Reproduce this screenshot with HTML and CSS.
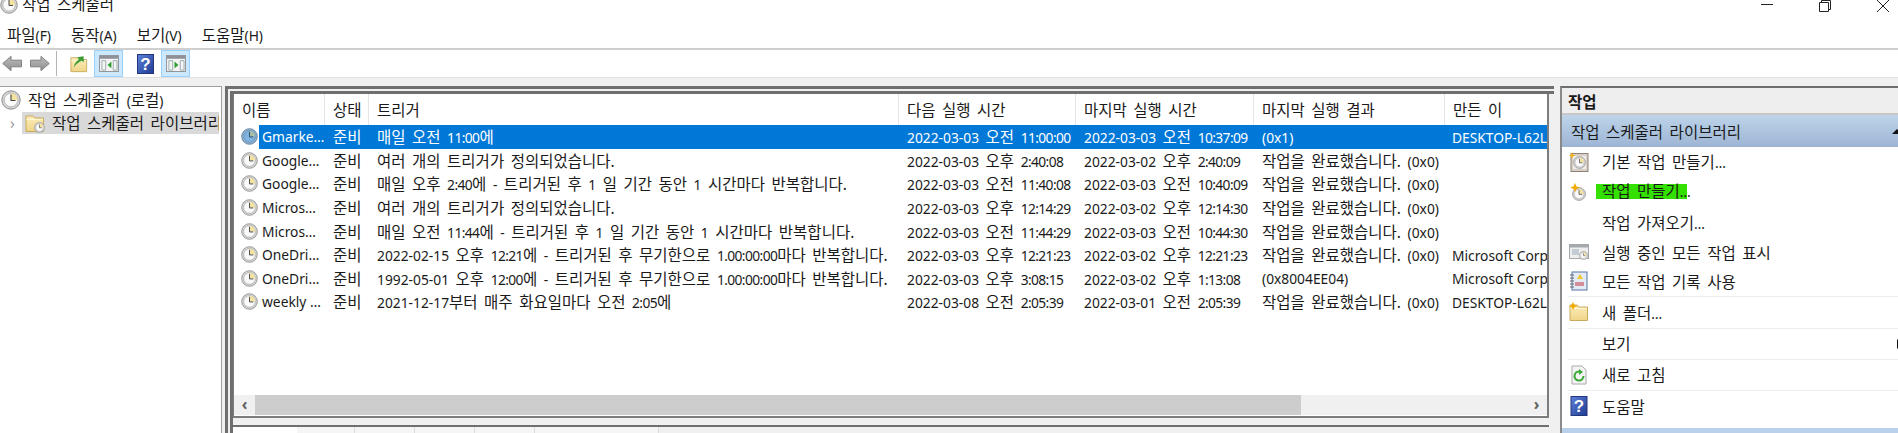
FILE: index.html
```html
<!DOCTYPE html>
<html lang="ko">
<head>
    <meta charset="UTF-8">
    <title>작업 스케줄러</title>
    <link rel="stylesheet" href="styles.css">
</head>
<body>
    <svg class="defs" width="0" height="0">
        <defs>
            <linearGradient id="help-fill" x1="0" y1="0" x2="1" y2="1">
                <stop offset="0" stop-color="#5f82d8"/>
                <stop offset="1" stop-color="#1f3a92"/>
            </linearGradient>
            <linearGradient id="folder-fill" x1="0" y1="0" x2="0" y2="1">
                <stop offset="0" stop-color="#fbeebb"/>
                <stop offset="1" stop-color="#f0d488"/>
            </linearGradient>
            <linearGradient id="arrow-fill" x1="0" y1="0" x2="0" y2="1">
                <stop offset="0" stop-color="#bdbdbd"/>
                <stop offset="1" stop-color="#8f8f8f"/>
            </linearGradient>
        </defs>
        <symbol id="clock" viewBox="0 0 20 20">
            <circle cx="10" cy="10" r="9.200" fill="#d4d4d4" stroke="#8f8f8f"/>
            <circle cx="10" cy="10" r="6.800" fill="#fafafa" stroke="#a5a5a5" stroke-width=".7"/>
            <path d="M10 10V3.200A6.800 6.800 0 0 1 16.800 10Z" fill="#f4e2a0"/>
            <path d="M10 4.500V10.500H14.500" fill="none" stroke="#444" stroke-width="1.100"/>
        </symbol>
        <symbol id="clock-sel" viewBox="0 0 20 20">
            <circle cx="10" cy="10" r="9.200" fill="#8fb0cc" stroke="#5f7f9f"/>
            <circle cx="10" cy="10" r="6.800" fill="#7fb4e0" stroke="#5f88ad" stroke-width=".7"/>
            <path d="M10 10V3.200A6.800 6.800 0 0 1 16.800 10Z" fill="#a8bfa8"/>
            <path d="M10 4.500V10.500H14.500" fill="none" stroke="#2c4a68" stroke-width="1.100"/>
        </symbol>
        <symbol id="panel" viewBox="0 0 21 18">
            <rect x=".5" y=".5" width="20" height="17" fill="#f5f5f5" stroke="#8d9097"/>
            <rect x="1" y="1" width="19" height="3" fill="#8d9097"/>
        </symbol>
        <symbol id="folder" viewBox="0 0 20 20">
            <path d="M1 3H8L10 5H18.500V18.500H1Z" fill="url(#folder-fill)" stroke="#c9aa5c"/>
            <path d="M1.500 6.500H18" stroke="#fff6d6"/>
        </symbol>
        <symbol id="help" viewBox="0 0 17 20">
            <rect x=".5" y=".5" width="16" height="19" fill="url(#help-fill)" stroke="#24377e"/>
            <text x="8.500" y="16" text-anchor="middle" class="help-mark">?</text>
        </symbol>
    </svg>

    <header class="titlebar">
        <div class="title">
            <svg class="ico-title"><use href="#clock"/></svg>
            <span>작업 스케줄러</span>
        </div>
        <div class="win-controls">
            <svg width="14" height="14" viewBox="0 0 14 14"><path d="M1 5.500H13" stroke="#222"/></svg>
            <svg width="14" height="14" viewBox="0 0 14 14"><path d="M1.500 3.500H10.500V12.500H1.500ZM3.500 3.500V1.500H12.500V10.500H10.500" fill="none" stroke="#222"/></svg>
            <svg width="14" height="14" viewBox="0 0 14 14"><path d="M1 1L13 13M13 1L1 13" stroke="#222"/></svg>
        </div>
    </header>

    <nav class="menubar">
        <span>파일<span class="n">(F)</span></span>
        <span>동작<span class="n">(A)</span></span>
        <span>보기<span class="n">(V)</span></span>
        <span>도움말<span class="n">(H)</span></span>
    </nav>

    <div class="toolbar">
        <svg class="tool-arrow" viewBox="0 0 21 17"><path d="M.8 8.500L9.500 1V5H20.500V12H9.500V16Z" fill="url(#arrow-fill)" stroke="#7c7c7c"/></svg>
        <svg class="tool-arrow" viewBox="0 0 21 17"><path d="M20.200 8.500L11.500 1V5H.5V12H11.500V16Z" fill="url(#arrow-fill)" stroke="#7c7c7c"/></svg>
        <span class="tool-sep"></span>
        <svg class="tool-folder" viewBox="0 0 20 20">
            <use href="#folder"/>
            <path d="M4 14C5 9 8 6 10 5L8 2.500L15 1.500L15.500 8L13 6.500C10 8 7 10 4 14Z" fill="#3e9c35"/>
        </svg>
        <button class="tool-btn">
            <svg viewBox="0 0 21 18" class="tool-panel"><use href="#panel"/><path d="M3 6H7V16H3ZM15 6H19V16H15Z" fill="none" stroke="#9aa"/><path d="M13 7V14L9 10.500Z" fill="#2a9c2a"/></svg>
        </button>
        <svg class="tool-help"><use href="#help"/></svg>
        <button class="tool-btn">
            <svg viewBox="0 0 21 18" class="tool-panel"><use href="#panel"/><path d="M3 6H7V16H3ZM15 6H19V16H15Z" fill="none" stroke="#9aa"/><path d="M9 7V14L13 10.500Z" fill="#2a9c2a"/></svg>
        </button>
    </div>

    <main class="workspace">
        <aside class="tree">
            <div class="tree-row">
                <svg class="ico-tree"><use href="#clock"/></svg>
                <span>작업 스케줄러 <span class="n">(</span>로컬<span class="n">)</span></span>
            </div>
            <div class="tree-row tree-child">
                <span class="chevron">›</span>
                <div class="tree-selected">
                    <svg class="ico-tree"><use href="#folder"/><use href="#clock" x="9" y="9" width="11" height="11"/></svg>
                    <span>작업 스케줄러 라이브러리</span>
                </div>
            </div>
        </aside>

        <section class="center">
            <div class="list">
                <div class="row list-head">
                    <div>이름</div><div>상태</div><div>트리거</div><div>다음 실행 시간</div><div>마지막 실행 시간</div><div>마지막 실행 결과</div><div>만든 이</div>
                </div>
                <div class="rows">
                    <div class="row selected">
                        <div class="name"><svg class="ico-row"><use href="#clock-sel"/></svg><span class="n">Gmarke…</span></div>
                        <div>준비</div>
                        <div>매일 오전 <span class="t">11:00</span>에</div>
                        <div><span class="n">2022-03-03</span> 오전 <span class="t">11:00:00</span></div>
                        <div><span class="n">2022-03-03</span> 오전 <span class="t">10:37:09</span></div>
                        <div><span class="n">(0x1)</span></div>
                        <div><span class="n">DESKTOP-L62L</span></div>
                    </div>
                    <div class="row">
                        <div class="name"><svg class="ico-row"><use href="#clock"/></svg><span class="n">Google…</span></div>
                        <div>준비</div>
                        <div>여러 개의 트리거가 정의되었습니다.</div>
                        <div><span class="n">2022-03-03</span> 오후 <span class="t">2:40:08</span></div>
                        <div><span class="n">2022-03-02</span> 오후 <span class="t">2:40:09</span></div>
                        <div>작업을 완료했습니다. <span class="n">(0x0)</span></div>
                        <div></div>
                    </div>
                    <div class="row">
                        <div class="name"><svg class="ico-row"><use href="#clock"/></svg><span class="n">Google…</span></div>
                        <div>준비</div>
                        <div>매일 오후 <span class="t">2:40</span>에 <span class="n">-</span> 트리거된 후 <span class="n">1</span> 일 기간 동안 <span class="n">1</span> 시간마다 반복합니다.</div>
                        <div><span class="n">2022-03-03</span> 오전 <span class="t">11:40:08</span></div>
                        <div><span class="n">2022-03-03</span> 오전 <span class="t">10:40:09</span></div>
                        <div>작업을 완료했습니다. <span class="n">(0x0)</span></div>
                        <div></div>
                    </div>
                    <div class="row">
                        <div class="name"><svg class="ico-row"><use href="#clock"/></svg><span class="n">Micros…</span></div>
                        <div>준비</div>
                        <div>여러 개의 트리거가 정의되었습니다.</div>
                        <div><span class="n">2022-03-03</span> 오후 <span class="t">12:14:29</span></div>
                        <div><span class="n">2022-03-02</span> 오후 <span class="t">12:14:30</span></div>
                        <div>작업을 완료했습니다. <span class="n">(0x0)</span></div>
                        <div></div>
                    </div>
                    <div class="row">
                        <div class="name"><svg class="ico-row"><use href="#clock"/></svg><span class="n">Micros…</span></div>
                        <div>준비</div>
                        <div>매일 오전 <span class="t">11:44</span>에 <span class="n">-</span> 트리거된 후 <span class="n">1</span> 일 기간 동안 <span class="n">1</span> 시간마다 반복합니다.</div>
                        <div><span class="n">2022-03-03</span> 오전 <span class="t">11:44:29</span></div>
                        <div><span class="n">2022-03-03</span> 오전 <span class="t">10:44:30</span></div>
                        <div>작업을 완료했습니다. <span class="n">(0x0)</span></div>
                        <div></div>
                    </div>
                    <div class="row">
                        <div class="name"><svg class="ico-row"><use href="#clock"/></svg><span class="n">OneDri…</span></div>
                        <div>준비</div>
                        <div><span class="n">2022-02-15</span> 오후 <span class="t">12:21</span>에 <span class="n">-</span> 트리거된 후 무기한으로 <span class="t">1.00:00:00</span>마다 반복합니다.</div>
                        <div><span class="n">2022-03-03</span> 오후 <span class="t">12:21:23</span></div>
                        <div><span class="n">2022-03-02</span> 오후 <span class="t">12:21:23</span></div>
                        <div>작업을 완료했습니다. <span class="n">(0x0)</span></div>
                        <div><span class="n">Microsoft Corp</span></div>
                    </div>
                    <div class="row">
                        <div class="name"><svg class="ico-row"><use href="#clock"/></svg><span class="n">OneDri…</span></div>
                        <div>준비</div>
                        <div><span class="n">1992-05-01</span> 오후 <span class="t">12:00</span>에 <span class="n">-</span> 트리거된 후 무기한으로 <span class="t">1.00:00:00</span>마다 반복합니다.</div>
                        <div><span class="n">2022-03-03</span> 오후 <span class="t">3:08:15</span></div>
                        <div><span class="n">2022-03-02</span> 오후 <span class="t">1:13:08</span></div>
                        <div><span class="n">(0x8004EE04)</span></div>
                        <div><span class="n">Microsoft Corp</span></div>
                    </div>
                    <div class="row">
                        <div class="name"><svg class="ico-row"><use href="#clock"/></svg><span class="n">weekly …</span></div>
                        <div>준비</div>
                        <div><span class="n">2021-12-17</span>부터 매주 화요일마다 오전 <span class="t">2:05</span>에</div>
                        <div><span class="n">2022-03-08</span> 오전 <span class="t">2:05:39</span></div>
                        <div><span class="n">2022-03-01</span> 오전 <span class="t">2:05:39</span></div>
                        <div>작업을 완료했습니다. <span class="n">(0x0)</span></div>
                        <div><span class="n">DESKTOP-L62L</span></div>
                    </div>
                </div>
                <div class="hscroll">
                    <span class="scroll-btn">‹</span>
                    <span class="scroll-thumb"></span>
                    <span class="scroll-btn end">›</span>
                </div>
            </div>
            <div class="splitter"></div>
            <div class="tabs">
                <span class="tab active"></span>
                <span class="tab w58"></span>
                <span class="tab w60"></span>
                <span class="tab w60"></span>
                <span class="tab w60"></span>
                <span class="tab w124"></span>
            </div>
        </section>

        <aside class="actions">
            <div class="actions-title">작업</div>
            <div class="actions-group">
                <span>작업 스케줄러 라이브러리</span>
                <span class="collapse"></span>
            </div>
            <div class="action">
                <svg class="ico-action" viewBox="0 0 20 20"><rect x="2" y="1.500" width="17" height="18" fill="#d8d0c6" stroke="#8d8176"/><rect x="4" y="4" width="13" height="13" fill="#eee"/><use href="#clock" x="4" y="4" width="13" height="13"/><path d="M3 0L4 2.500L6.500 3.500L4 4.500L3 7L2 4.500L0 3.500L2 2.500Z" fill="#f2b520"/></svg>
                <span>기본 작업 만들기<span class="n">…</span></span>
            </div>
            <div class="action">
                <svg class="ico-action" viewBox="0 0 20 20"><use href="#clock" x="3" y="5" width="14" height="14"/><path d="M6 1L7.500 4.500L11 5.500L7.500 7L6 10L4.500 7L1 5.500L4.500 4.500Z" fill="#f2a900"/></svg>
                <span class="hilite">작업 만들기<span class="n">…</span></span>
            </div>
            <div class="action tall">
                <span class="ico-blank"></span>
                <span>작업 가져오기<span class="n">…</span></span>
            </div>
            <div class="action short">
                <svg class="ico-action" viewBox="0 0 20 16"><rect x=".5" y=".5" width="19" height="14" fill="#eee" stroke="#a5a9ad"/><rect x="1" y="1" width="18" height="2.500" fill="#a5a9ad"/><path d="M3 6H10M3 8H10M3 10H10" stroke="#9ab"/><use href="#clock" x="10" y="7" width="9" height="9"/></svg>
                <span>실행 중인 모든 작업 표시</span>
            </div>
            <div class="action line">
                <svg class="ico-action" viewBox="0 0 20 20"><rect x="3" y="1" width="15" height="18" fill="#e3ebf6" stroke="#5674a6"/><path d="M1 4H5M1 7H5M1 10H5M1 13H5M1 16H5" stroke="#666"/><path d="M11 3L14 8H8Z" fill="#f4c52c"/><path d="M6 12H15M6 14H15" stroke="#c4303a"/></svg>
                <span>모든 작업 기록 사용</span>
            </div>
            <div class="action line big">
                <svg class="ico-action" viewBox="0 0 20 20"><use href="#folder"/><path d="M4 0L5.500 3L9 4L5.500 5L4 8L2.500 5L0 4L2.500 3Z" fill="#f2a900"/></svg>
                <span>새 폴더<span class="n">…</span></span>
            </div>
            <div class="action line tall">
                <span class="ico-blank"></span>
                <span>보기</span>
                <span class="submenu"></span>
            </div>
            <div class="action line tall">
                <svg class="ico-action" viewBox="0 0 20 20"><path d="M3 1H13L17 5V19H3Z" fill="#f4f4f4" stroke="#aaa"/><path d="M14.500 11A4.500 4.500 0 1 1 12 7" fill="none" stroke="#39a935" stroke-width="2"/><path d="M10 4L14 7L10 10Z" fill="#39a935"/></svg>
                <span>새로 고침</span>
            </div>
            <div class="action tall">
                <svg class="ico-action"><use href="#help"/></svg>
                <span>도움말</span>
            </div>
            <div class="actions-foot"></div>
        </aside>
    </main>
</body>
</html>
```

FILE: styles.css
```css
* {
    margin: 0;
    padding: 0;
    box-sizing: border-box;
}

html, body {
    height: 433px;
    overflow: hidden;
}

body {
    font-family: "Noto Sans", "Noto Sans CJK KR", sans-serif;
    font-size: 15.5px;
    word-spacing: 2.5px;
    color: #1a1a1a;
    background: #fff;
}

/* latin and digits run smaller than the hangul around them */
.n, .t {
    font-size: 13.8px;
    word-spacing: 0;
}

/* clock times sit tighter than dates */
.t {
    letter-spacing: -.6px;
}

.defs {
    display: block;
}

.help-mark {
    font-family: "Liberation Sans", sans-serif;
    font-size: 17px;
    font-weight: bold;
    fill: #fff;
}

/* title bar, cut off by the top of the window */
.titlebar {
    height: 24px;
    display: flex;
    justify-content: space-between;
    align-items: flex-start;
}

.title {
    display: flex;
    align-items: center;
    gap: 4px;
    margin-top: -8px;
}

.ico-title {
    width: 18px;
    height: 18px;
    margin-top: 2px;
}

.win-controls {
    display: flex;
    gap: 44px;
    margin-right: 8px;
    margin-top: -1px;
}

.menubar {
    height: 26px;
    display: flex;
    align-items: center;
    gap: 20px;
    padding: 0 0 3px 7px;
    border-bottom: 2px solid #cfcfcf;
}

.toolbar {
    height: 28px;
    display: flex;
    align-items: center;
    padding-left: 2px;
    border-bottom: 1px solid #e0e0e0;
}

.tool-arrow {
    width: 20px;
    height: 17px;
    margin-right: 8px;
}

.tool-sep {
    width: 1px;
    height: 25px;
    background: #b5b5b5;
    margin: 0 13px 0 -2px;
}

.tool-folder {
    width: 18px;
    height: 18px;
    margin-right: 6px;
}

.tool-btn {
    width: 29px;
    height: 27px;
    display: flex;
    align-items: center;
    justify-content: center;
    background: #cce8ff;
    border: 1px solid #99d1ff;
}

.tool-panel {
    width: 20px;
    height: 17px;
}

.tool-help {
    width: 17px;
    height: 20px;
    margin: 0 7px 0 14px;
}

.workspace {
    height: 355px;
    display: flex;
    padding-top: 8px;
    background: #f0f0f0;
}

.tree {
    width: 222px;
    background: #fff;
    border-top: 1px solid #a0a0a0;
    border-right: 1px solid #a0a0a0;
    flex-shrink: 0;
    padding-top: 1px;
    overflow: hidden;
}

.tree-row {
    display: flex;
    align-items: center;
    height: 23px;
    white-space: nowrap;
    gap: 7px;
    padding-left: 1px;
}

.ico-tree {
    width: 20px;
    height: 20px;
    flex-shrink: 0;
}

.tree-child {
    padding-left: 10px;
    gap: 7px;
}

.chevron {
    width: 5px;
    color: #999;
}

.tree-selected {
    flex: 1;
    min-width: 0;
    height: 22px;
    display: flex;
    align-items: center;
    gap: 7px;
    padding-left: 3px;
    background: #d9d9d9;
    margin-right: 2px;
    overflow: hidden;
}

.center {
    width: 1329px;
    margin-left: 3px;
    flex-shrink: 0;
    background: #f0f0f0;
    border-top: 8px double #6f6f6f;
    border-left: 8px double #6f6f6f;
    background-clip: padding-box;
    display: flex;
    flex-direction: column;
}

.list {
    height: 324px;
    margin-right: 5px;
    display: flex;
    flex-direction: column;
    background: #fff;
    border: solid #7d7d7d;
    border-width: 0 2px 2px 1px;
    overflow: hidden;
}

.row {
    display: grid;
    grid-template-columns: 91px 44px 530px 177px 178px 191px 103px;
    white-space: nowrap;
    align-items: center;
}

.row > div {
    padding-left: 8px;
    overflow: hidden;
}

.list-head {
    height: 31px;
    flex-shrink: 0;
}

.list-head > div {
    height: 100%;
    display: flex;
    align-items: center;
    padding-bottom: 1px;
    border-right: 1px solid #e5e5e5;
}

.rows {
    flex: 1;
}

.rows .row {
    height: 23.6px;
}

.rows .row > div:last-child {
    padding-left: 7px;
}

.row .name {
    display: flex;
    align-items: center;
    gap: 4px;
}

.ico-row {
    width: 17px;
    height: 17px;
    flex-shrink: 0;
    margin-left: -1px;
}

.selected {
    color: #fff;
    background: linear-gradient(to right, #fff 25px, #0078d7 25px);
}

.hscroll {
    height: 20px;
    flex-shrink: 0;
    margin-bottom: 1px;
    display: flex;
    background: #f0f0f0;
}

.scroll-btn {
    width: 21px;
    color: #606060;
    text-align: center;
    line-height: 18px;
    font-weight: bold;
}

.scroll-btn.end {
    margin-left: auto;
}

.scroll-thumb {
    width: 1046px;
    background: #cdcdcd;
}

.splitter {
    height: 9px;
    margin-right: 5px;
    border-bottom: 2px solid #6f6f6f;
}

.tabs {
    flex: 1;
    display: flex;
}

.tab {
    width: 64px;
    background: #f5f5f5;
    border-right: 1px solid #dcdcdc;
}

.tab.active {
    background: #fff;
    border-right: none;
}

.w58 { width: 58px; }
.w60 { width: 60px; }
.w124 { width: 124px; }

.actions {
    flex: 1;
    margin-left: 6px;
    background: #fff;
    border-top: 2px solid #6e6e6e;
    border-left: 2px solid #8a8a8a;
    display: flex;
    flex-direction: column;
    overflow: hidden;
}

.actions-title {
    height: 27px;
    flex-shrink: 0;
    padding-left: 6px;
    font-weight: bold;
    line-height: 29px;
    background: #eee;
    border-bottom: 2px solid #c8c8c8;
}

.actions-group {
    height: 32px;
    flex-shrink: 0;
    display: flex;
    align-items: center;
    justify-content: space-between;
    padding-left: 9px;
    background: linear-gradient(to bottom, #bdd4ea, #9db5d4);
}

.collapse {
    width: 0;
    height: 0;
    border: solid transparent;
    border-width: 0 5px 5px;
    border-bottom-color: #111;
    margin-right: -4px;
}

.action {
    height: 30px;
    flex-shrink: 0;
    display: flex;
    align-items: center;
    gap: 13px;
    padding: 0 0 1px 1px;
    margin-left: 6px;
    white-space: nowrap;
}

.action.short { height: 29px; }
.action.tall { height: 31px; }
.action.big { height: 32px; }

.line {
    border-bottom: 1px solid #ececec;
}

.ico-action {
    width: 20px;
    height: 20px;
    flex-shrink: 0;
}

.ico-blank {
    width: 20px;
    flex-shrink: 0;
}

.hilite {
    background: #33e000;
    margin-left: -6px;
    padding-left: 6px;
    width: 91px;
    line-height: 15px;
}

.submenu {
    width: 0;
    height: 0;
    border: solid transparent;
    border-width: 5px 0 5px 5px;
    border-left-color: #111;
    margin-left: auto;
    margin-right: -4px;
}

.actions-foot {
    flex: 1;
    background: #b9d1ea;
    margin-top: 6px;
}
```
